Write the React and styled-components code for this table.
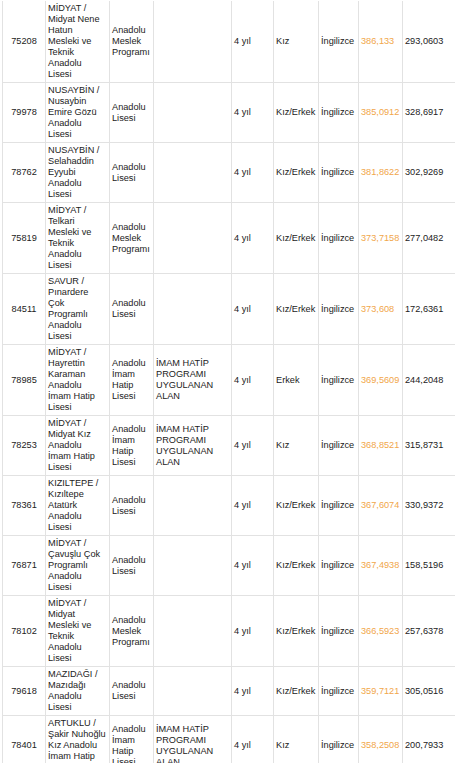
import styled, { createGlobalStyle } from 'styled-components';

const GlobalStyle = createGlobalStyle`
  html, body {
    margin: 0;
    padding: 0;
    overflow: hidden;
    background: #fff;
  }
  body {
    padding: 1px 0 0 2px;
    font-family: "Liberation Sans", Arial, sans-serif;
  }
`;

// tablo: sabit sütun genişlikleri
const ResultsGrid = styled.div`
  display: grid;
  grid-template-columns: 43px 64px 44px 78px 42px 45px 40px 44px 60px;
  border-left: 1px solid #e2e2e2;
  width: max-content;
`;

// satır kendi kutusunu çizmez, hücreler grid'e dağılır
const Row = styled.div`
  display: contents;
`;

const Cell = styled.div`
  box-sizing: border-box;
  display: flex;
  align-items: center;
  justify-content: ${(props) => (props.$center ? 'center' : 'flex-start')};
  padding: 2px;
  border-right: 1px solid #e2e2e2;
  border-bottom: 1px solid #e2e2e2;
  font-size: 9.2px;
  line-height: 11px;
  color: ${(props) => (props.$score ? '#f1a64a' : '#222')};
  white-space: pre-line;
`;

const IHL = 'İMAM HATİP\nPROGRAMI\nUYGULANAN\nALAN';

const rows = [
  ['75208', 'MİDYAT /\nMidyat Nene\nHatun\nMesleki ve\nTeknik\nAnadolu\nLisesi', 'Anadolu\nMeslek\nProgramı', '', 'Kız', '386,133', '293,0603'],
  ['79978', 'NUSAYBİN /\nNusaybin\nEmire Gözü\nAnadolu\nLisesi', 'Anadolu\nLisesi', '', 'Kız/Erkek', '385,0912', '328,6917'],
  ['78762', 'NUSAYBİN /\nSelahaddin\nEyyubi\nAnadolu\nLisesi', 'Anadolu\nLisesi', '', 'Kız/Erkek', '381,8622', '302,9269'],
  ['75819', 'MİDYAT /\nTelkari\nMesleki ve\nTeknik\nAnadolu\nLisesi', 'Anadolu\nMeslek\nProgramı', '', 'Kız/Erkek', '373,7158', '277,0482'],
  ['84511', 'SAVUR /\nPınardere\nÇok\nProgramlı\nAnadolu\nLisesi', 'Anadolu\nLisesi', '', 'Kız/Erkek', '373,608', '172,6361'],
  ['78985', 'MİDYAT /\nHayrettin\nKaraman\nAnadolu\nİmam Hatip\nLisesi', 'Anadolu\nİmam\nHatip\nLisesi', IHL, 'Erkek', '369,5609', '244,2048'],
  ['78253', 'MİDYAT /\nMidyat Kız\nAnadolu\nİmam Hatip\nLisesi', 'Anadolu\nİmam\nHatip\nLisesi', IHL, 'Kız', '368,8521', '315,8731'],
  ['78361', 'KIZILTEPE /\nKızıltepe\nAtatürk\nAnadolu\nLisesi', 'Anadolu\nLisesi', '', 'Kız/Erkek', '367,6074', '330,9372'],
  ['76871', 'MİDYAT /\nÇavuşlu Çok\nProgramlı\nAnadolu\nLisesi', 'Anadolu\nLisesi', '', 'Kız/Erkek', '367,4938', '158,5196'],
  ['78102', 'MİDYAT /\nMidyat\nMesleki ve\nTeknik\nAnadolu\nLisesi', 'Anadolu\nMeslek\nProgramı', '', 'Kız/Erkek', '366,5923', '257,6378'],
  ['79618', 'MAZIDAĞI /\nMazıdağı\nAnadolu\nLisesi', 'Anadolu\nLisesi', '', 'Kız/Erkek', '359,7121', '305,0516'],
  ['78401', 'ARTUKLU /\nŞakir Nuhoğlu\nKız Anadolu\nİmam Hatip\nLisesi', 'Anadolu\nİmam\nHatip\nLisesi', IHL, 'Kız', '358,2508', '200,7933'],
];

const App = () => {
  return (
    <>
      <GlobalStyle />
      <ResultsGrid>
        {rows.map(([code, school, type, field, gender, score, base]) => (
          <Row key={code}>
            <Cell $center>{code}</Cell>
            <Cell>{school}</Cell>
            <Cell>{type}</Cell>
            <Cell>{field}</Cell>
            <Cell>4 yıl</Cell>
            <Cell>{gender}</Cell>
            <Cell>İngilizce</Cell>
            <Cell $score>{score}</Cell>
            <Cell>{base}</Cell>
          </Row>
        ))}
      </ResultsGrid>
    </>
  );
};

export default App;
